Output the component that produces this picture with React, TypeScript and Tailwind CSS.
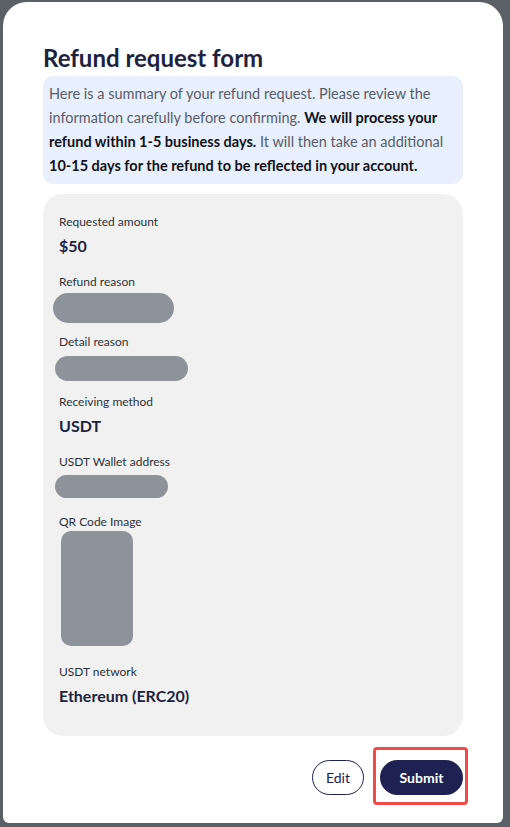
import React from 'react'

const font = { fontFamily: 'Lato, "Noto Sans", sans-serif' }

function Pill({ className }: { className: string }) {
  return <div className={`bg-[#8e939b] rounded-full ${className}`} />
}

export default function App() {
  return (
    <div style={font} className="w-[510px] h-[827px] bg-[#5b6067] pt-[2px] pl-[3px] overflow-hidden">
      <div className="w-[500px] h-[821px] bg-white rounded-t-[24px] rounded-b-[6px] px-10 pt-[41px]">
        <h1 className="text-[24px] leading-[29px] font-bold text-[#1b2340]">Refund request form</h1>

        {/* summary notice */}
        <div className="mt-[4px] bg-[#e8effd] rounded-[10px] px-1.5 py-1.5 text-[14.5px] leading-6 text-[#575e67]">
          Here is a summary of your refund request. Please review the information carefully before confirming.{' '}
          <span className="font-bold text-[#111318]">We will process your refund within 1-5 business days.</span>{' '}
          It will then take an additional{' '}
          <span className="font-bold text-[#111318]">
            <span className="whitespace-nowrap">10-15</span> days for the refund to be reflected in your account.
          </span>
        </div>

        {/* details card */}
        <div className="mt-[10px] h-[542px] bg-[#f1f1f1] rounded-[20px] px-4 pt-5">
          <div className="h-[60px]">
            <div className="text-[12px] leading-4 text-[#2d313a]">Requested amount</div>
            <div className="mt-1 text-[16px] leading-6 font-bold text-[#1b2340]">$50</div>
          </div>
          <div className="h-[60px]">
            <div className="text-[12px] leading-4 text-[#2d313a]">Refund reason</div>
            <Pill className="mt-[3px] -ml-[6px] h-[30px] w-[121px]" />
          </div>
          <div className="h-[60px]">
            <div className="text-[12px] leading-4 text-[#2d313a]">Detail reason</div>
            <Pill className="mt-[6px] -ml-[4px] h-[25px] w-[133px]" />
          </div>
          <div className="h-[60px]">
            <div className="text-[12px] leading-4 text-[#2d313a]">Receiving method</div>
            <div className="mt-1 text-[16px] leading-6 font-bold text-[#1b2340]">USDT</div>
          </div>
          <div className="h-[60px]">
            <div className="text-[12px] leading-4 text-[#2d313a]">USDT Wallet address</div>
            <Pill className="mt-[5px] -ml-[4px] h-[23px] w-[113px]" />
          </div>
          <div className="h-[150px]">
            <div className="text-[12px] leading-4 text-[#2d313a]">QR Code Image</div>
            <div className="mt-[1px] ml-[2px] h-[115px] w-[72px] bg-[#8e939b] rounded-[10px]" />
          </div>
          <div>
            <div className="text-[12px] leading-4 text-[#2d313a]">USDT network</div>
            <div className="mt-1 text-[16px] leading-6 font-bold text-[#1b2340]">Ethereum (ERC20)</div>
          </div>
        </div>

        {/* actions */}
        <div className="mt-6 flex justify-end items-center gap-4">
          <button className="h-[35px] w-[52px] rounded-full border border-[#1e2152] text-[14px] text-[#1e2152] bg-white">
            Edit
          </button>
          <div className="relative">
            <button className="h-[35px] w-[83px] rounded-full bg-[#1e2152] text-[14px] font-bold text-white">
              Submit
            </button>
            <div className="absolute -left-[7px] -top-[13px] -right-[5px] -bottom-[10px] border-[3px] border-[#f04b4b] rounded-[4px] pointer-events-none" />
          </div>
        </div>
      </div>
    </div>
  )
}
